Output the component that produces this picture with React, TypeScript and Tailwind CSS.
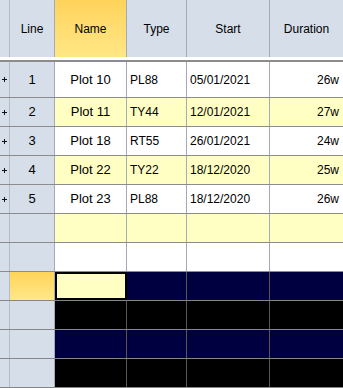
import React from "react";

type Row = { line?: string; name?: string; type?: string; start?: string; dur?: string; bg: string; plus?: boolean };

const rows: Row[] = [
  { line: "1", name: "Plot 10", type: "PL88", start: "05/01/2021", dur: "26w", bg: "white", plus: true },
  { line: "2", name: "Plot 11", type: "TY44", start: "12/01/2021", dur: "27w", bg: "yellow", plus: true },
  { line: "3", name: "Plot 18", type: "RT55", start: "26/01/2021", dur: "24w", bg: "white", plus: true },
  { line: "4", name: "Plot 22", type: "TY22", start: "18/12/2020", dur: "25w", bg: "yellow", plus: true },
  { line: "5", name: "Plot 23", type: "PL88", start: "18/12/2020", dur: "26w", bg: "white", plus: true },
  { bg: "yellow" },
  { bg: "white" },
];

function Plus() {
  return (
    <svg width="5" height="5" viewBox="0 0 5 5" className="block">
      <line x1="0" y1="2.5" x2="5" y2="2.5" stroke="#111" strokeWidth="1" />
      <line x1="2.5" y1="0" x2="2.5" y2="5" stroke="#111" strokeWidth="1" />
    </svg>
  );
}

function LightRow({ r, h }: { r: Row; h: string }) {
  const bg = r.bg === "yellow" ? "bg-[#ffffc4]" : "bg-white";
  return (
    <div className={`flex ${h} border-b border-[#8c8c8c]`}>
      <div className="w-[10px] shrink-0 bg-[#d5dee9] border-r border-[#b3bdca] flex items-center justify-center">
        {r.plus ? <Plus /> : null}
      </div>
      <div className="w-[45px] shrink-0 bg-[#d5dee9] border-r border-[#a3abb8] flex items-center justify-center text-[13px]">
        {r.line}
      </div>
      <div className={`w-[72px] shrink-0 ${bg} border-r border-[#a3abb8] flex items-center justify-center text-[13px]`}>
        {r.name}
      </div>
      <div className={`w-[60px] shrink-0 ${bg} border-r border-[#a3abb8] flex items-center pl-[3px] text-[12px]`}>
        {r.type}
      </div>
      <div className={`w-[83px] shrink-0 ${bg} border-r border-[#a3abb8] flex items-center pl-[3px] text-[12px]`}>
        {r.start}
      </div>
      <div className={`flex-1 ${bg} flex items-center justify-end pr-[4px] text-[12px]`}>{r.dur}</div>
    </div>
  );
}

function DarkRow({ color, selected }: { color: string; selected?: boolean }) {
  return (
    <div className="flex h-[29px] border-b border-[#868686]">
      <div className="w-[10px] shrink-0 bg-[#d5dee9] border-r border-[#b3bdca]" />
      <div
        className={`w-[45px] shrink-0 border-r border-[#a3abb8] ${
          selected ? "bg-gradient-to-b from-[#ffd457] to-[#ffe888]" : "bg-[#d5dee9]"
        }`}
      />
      {selected ? (
        <div className="w-[72px] shrink-0 bg-[#ffffc4] border-2 border-black" />
      ) : (
        <div className={`w-[72px] shrink-0 ${color} border-r border-[#5c564c]`} />
      )}
      <div className={`w-[60px] shrink-0 ${color} border-r border-[#5c564c]`} />
      <div className={`w-[83px] shrink-0 ${color} border-r border-[#5c564c]`} />
      <div className={`flex-1 ${color}`} />
    </div>
  );
}

export default function App() {
  return (
    <div
      className="w-[343px] h-[388px] overflow-hidden bg-white text-black"
      style={{ fontFamily: '"Liberation Sans", Arial, sans-serif' }}
    >
      <div className="flex h-[57px] bg-[#d5dee9] text-[12px]">
        <div className="w-[10px] shrink-0 border-r border-[#b3bdca]" />
        <div className="w-[45px] shrink-0 border-r border-[#a3abb8] flex items-center justify-center">Line</div>
        <div className="w-[72px] shrink-0 border-r border-[#a3abb8] bg-gradient-to-b from-[#ffd35a] to-[#ffe785] flex items-center justify-center">
          Name
        </div>
        <div className="w-[60px] shrink-0 border-r border-[#a3abb8] flex items-center justify-center">Type</div>
        <div className="w-[83px] shrink-0 border-r border-[#a3abb8] flex items-center justify-center">Start</div>
        <div className="flex-1 flex items-center justify-center">Duration</div>
      </div>
      <div className="h-[3px] bg-white" />
      <div className="h-[2px] bg-[#8c8c8c]" />
      {rows.map((r, i) => (
        <LightRow key={i} r={r} h={i === 0 ? "h-[36px]" : "h-[29px]"} />
      ))}
      <DarkRow color="bg-[#000040]" selected />
      <DarkRow color="bg-black" />
      <DarkRow color="bg-[#000040]" />
      <DarkRow color="bg-black" />
    </div>
  );
}
